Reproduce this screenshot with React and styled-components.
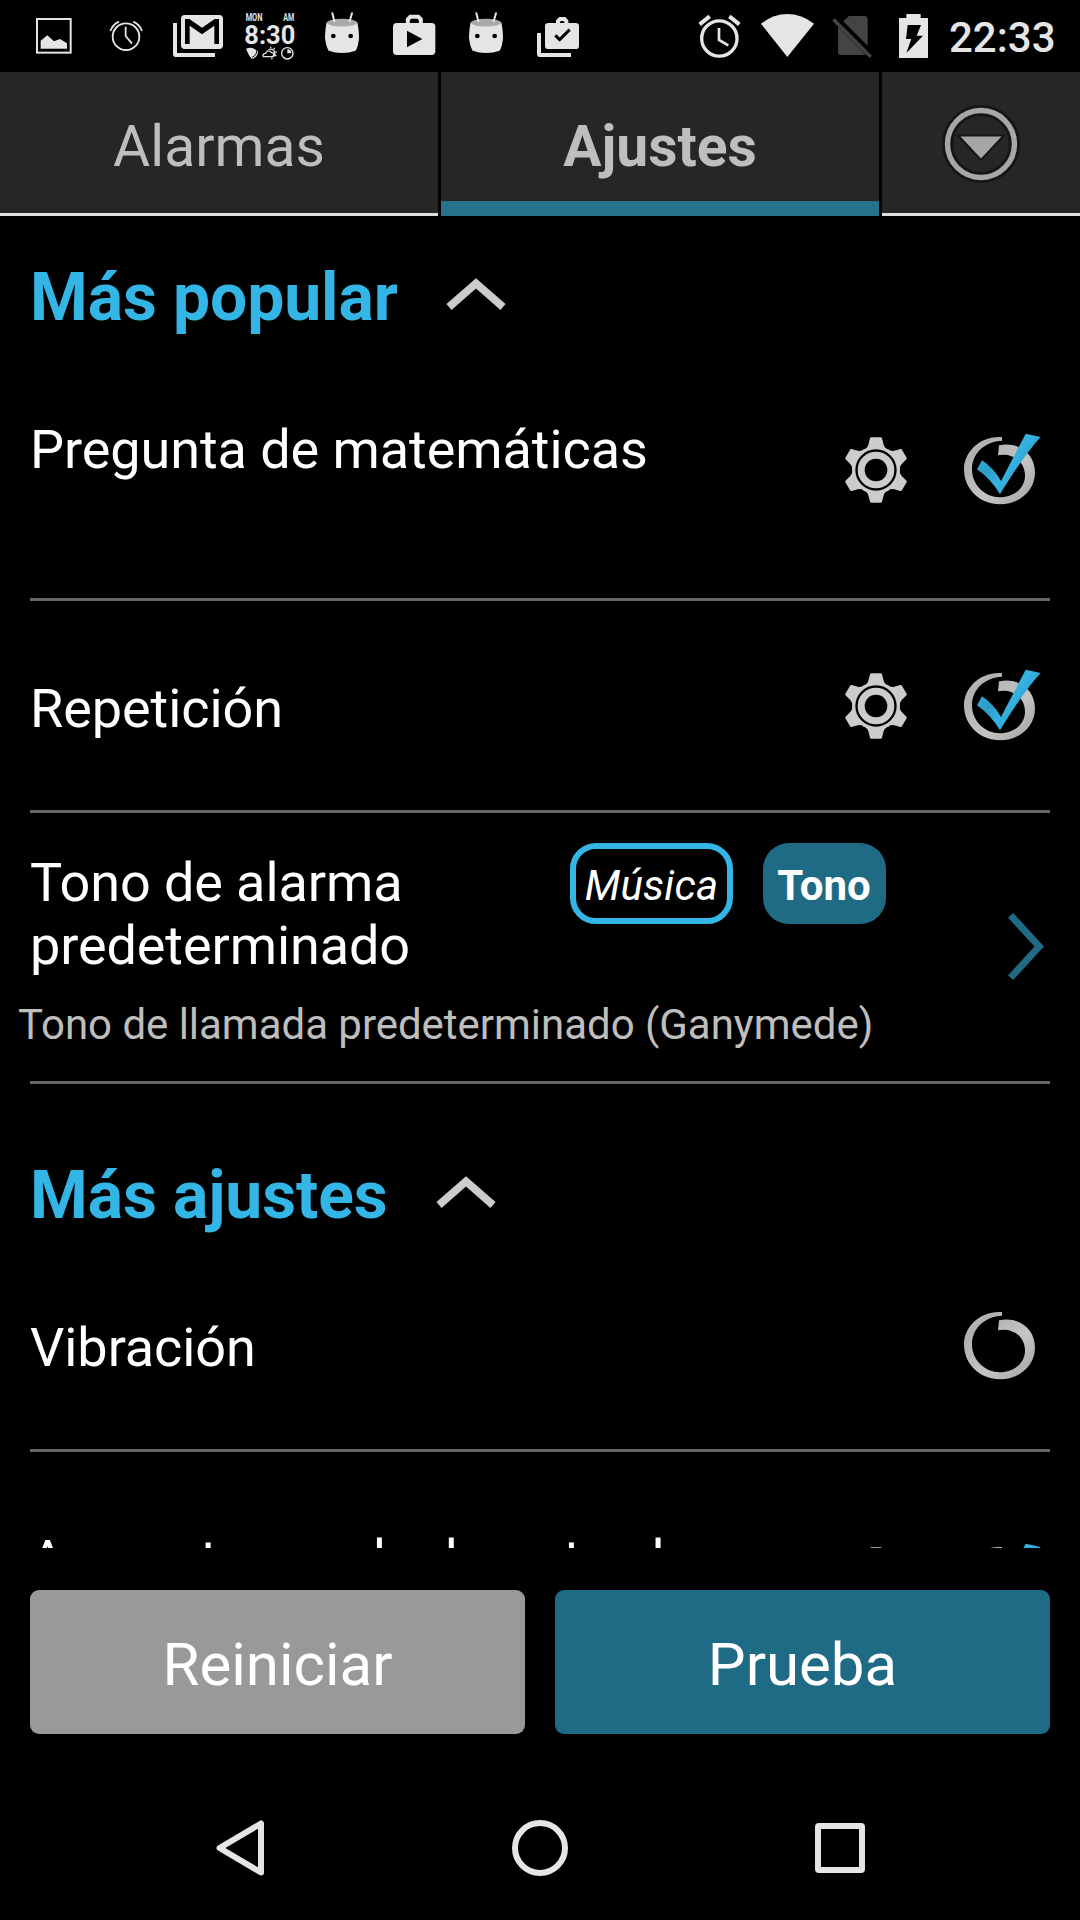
import React, { useState } from 'react';
import styled, { createGlobalStyle } from 'styled-components';

const BLUE = '#33b5e5';
const TEAL = '#1f6b85';
const STATUS = '#e5e5e5';

const App = () => {
  const [tab, setTab] = useState('Ajustes');

  return (
    <Screen>
      <GlobalStyle />
      <StatusBar>
        <PictureIcon />
        <ThinAlarmIcon />
        <MailIcon />
        <ClockWidgetIcon />
        <DroidIcon />
        <PlayBagIcon />
        <DroidIcon />
        <CheckBagIcon />
        <SystemIcons />
      </StatusBar>

      <Tabs>
        {['Alarmas', 'Ajustes'].map(name => (
          <Tab key={name} $active={tab === name} onClick={() => setTab(name)}>
            {name}
          </Tab>
        ))}
        <MenuTab>
          <DropdownIcon />
        </MenuTab>
      </Tabs>

      <List>
        <Heading $height={149} $top={43}>
          Más popular
          <ChevronUp />
        </Heading>
        <Setting title="Pregunta de matemáticas" height={236} top={53} gear checked />
        <Setting title="Repetición" height={212} gear checked />
        <RingtoneRow>
          <RingtoneInfo>
            <RingtoneTop>
              <RingtoneTitle>Tono de alarma predeterminado</RingtoneTitle>
              <MusicChip>Música</MusicChip>
              <ToneChip>Tono</ToneChip>
            </RingtoneTop>
            <Subtitle>Tono de llamada predeterminado (Ganymede)</Subtitle>
          </RingtoneInfo>
          <ArrowRight />
        </RingtoneRow>
        <Heading $height={156} $top={73}>
          Más ajustes
          <ChevronUp />
        </Heading>
        <Setting title="Vibración" height={212} />
        <Setting title="Aumentar gradualmente el" height={259} iconTop={88} gear checked />
      </List>

      <Footer>
        <Button $color="#999999">Reiniciar</Button>
        <Button $color={TEAL}>Prueba</Button>
      </Footer>

      <NavBar>
        <NavIcon viewBox="0 0 72 72">
          <path d="M57 11.500V60.500L15.500 36Z" />
        </NavIcon>
        <NavIcon viewBox="0 0 72 72">
          <circle cx="36" cy="36" r="25" />
        </NavIcon>
        <NavIcon viewBox="0 0 72 72">
          <rect x="14" y="14" width="44" height="44" rx="1" />
        </NavIcon>
      </NavBar>
    </Screen>
  );
};

export default App;

const Setting = ({ title, height, top = 76, iconTop = 65, gear, checked }) => (
  <Row $height={height}>
    <RowTitle $top={top}>{title}</RowTitle>
    <RowIcons $top={iconTop}>
      {gear && <GearIcon />}
      <CheckIcon checked={checked} />
    </RowIcons>
  </Row>
);

const GearIcon = () => (
  <svg width="66" height="78" viewBox="-99 -120 198 234" fill="#cccccc">
    {[0, 60, 120, 180, 240, 300].map(deg => (
      <path
        key={deg}
        d="M-40 -60Q-26 -65 -23 -76L-18 -95Q-17 -98 -14 -98H14Q17 -98 18 -95L23 -76Q26 -65 40 -60Z"
        transform={`rotate(${deg})`}
      />
    ))}
    <circle r="71" />
    <circle r="58.5" fill="none" stroke="#000" strokeWidth="7" />
    <circle r="34" fill="#000" />
  </svg>
);

const CheckIcon = ({ checked }) => (
  <svg width="84" height="78" viewBox="480 90 252 234">
    <defs>
      <linearGradient id="ring" x1="0" y1="0" x2="1" y2="1">
        <stop offset="0" stopColor="#cdcdcd" />
        <stop offset="0.2" stopColor="#b0b0b0" />
        <stop offset="0.6" stopColor="#c4c4c4" />
        <stop offset="1" stopColor="#a2a2a2" />
      </linearGradient>
      <linearGradient id="tick" x1="0" y1="0" x2="1" y2="0.6">
        <stop offset="0" stopColor="#3ab4e2" />
        <stop offset="0.4" stopColor="#2c9dcb" />
        <stop offset="0.6" stopColor="#36b3e2" />
        <stop offset="1" stopColor="#2a93bf" />
      </linearGradient>
    </defs>
    <path
      d="M606 111C542 106 492 154 492 208C492 268 540 313 600 313C660 313 705 270 705 218C705 164 662 124 597 136L594 166C640 156 675 187 675 227C675 263 642 292 600 292C555 292 516 256 516 208C516 160 555 124 606 122Z"
      fill="url(#ring)"
    />
    {checked && (
      <path
        d="M531 208L546 181Q580 203 603 243L677 101L722 111Q672 165 600 283Q572 236 531 208Z"
        fill="url(#tick)"
      />
    )}
  </svg>
);

const ChevronUp = () => (
  <svg width="60" height="33" viewBox="0 0 60 33" fill="none" stroke="#cccccc" strokeWidth="7.8">
    <path d="M3 29L30 5.4L57 29" />
  </svg>
);

const ArrowRight = () => (
  <svg width="36" height="68" viewBox="0 0 36 68" fill="none" stroke={TEAL} strokeWidth="7">
    <path d="M2.6 2.4L31.2 33.5L2.6 64.6" />
  </svg>
);

const DropdownIcon = () => (
  <svg width="84" height="84" viewBox="0 0 84 84">
    <circle cx="42" cy="42" r="33.5" fill="none" stroke="#151515" strokeWidth="11" />
    <circle cx="42" cy="42" r="33.5" fill="none" stroke="#a6a6a6" strokeWidth="5.4" />
    <path d="M21.5 34.5H62.5L42 56.5Z" fill="#a6a6a6" stroke="#151515" strokeWidth="4" paintOrder="stroke" />
  </svg>
);

const PictureIcon = () => (
  <StatusIcon viewBox="54 0 216 216">
    <rect x="111" y="57" width="101" height="101" fill="none" stroke={STATUS} strokeWidth="6" />
    <path d="M122 146V122L142 106L162 124L180 117L201 130V146Z" />
  </StatusIcon>
);

const ThinAlarmIcon = () => (
  <StatusIcon viewBox="270 0 216 216">
    <g fill="none" stroke={STATUS} strokeWidth="5.500">
      <circle cx="378" cy="110" r="40" />
      <path d="M377 80V108L396 131M331 93Q338 74 357 65M426 93Q419 74 400 65" />
    </g>
  </StatusIcon>
);

const MailIcon = () => (
  <StatusIcon viewBox="486 0 216 216">
    <path d="M519 69H531V159H645V171H529Q519 171 519 161Z" />
    <rect x="543" y="45" width="126" height="102" rx="11" />
    <path d="M555 57H568L606 83L644 57H657V132H643V77L606 103L569 77V132H555Z" fill="#000" />
  </StatusIcon>
);

const ClockWidgetIcon = () => (
  <StatusIcon viewBox="702 0 216 216">
    <WidgetText x="737" y="63" fontSize="32" textLength="50" lengthAdjust="spacingAndGlyphs">MON</WidgetText>
    <WidgetText x="850" y="63" fontSize="32" textLength="33" lengthAdjust="spacingAndGlyphs">AM</WidgetText>
    <WidgetText x="733" y="132" fontSize="80" textLength="153" lengthAdjust="spacingAndGlyphs">8:30</WidgetText>
    <path d="M738 146Q752 140 762 146L774 154Q774 172 756 177Q748 170 744 160Z" />
    <path d="M770 152Q770 166 757 172" fill="none" stroke="#000" strokeWidth="3" />
    <g fill="none" stroke={STATUS} strokeWidth="4">
      <path d="M790 170Q786 162 797 160Q803 147 814 157Q825 158 819 170Z" />
      <path d="M806 149Q818 144 824 156Q826 166 820 170" />
      <path d="M812 140V144M824 144L821 148M830 156H826M829 168L825 165M816 178L815 173" />
      <circle cx="862" cy="160" r="17" />
    </g>
    <path d="M862 160V148A12 12 0 0 1 874 160Z" />
  </StatusIcon>
);

const DroidIcon = () => (
  <StatusIcon viewBox="18 0 216 216">
    <path d="M80 66Q75 88 75 112Q77 138 86 152Q105 159 126 159Q147 159 167 152Q176 138 177 112Q177 88 172 66Z" />
    <ellipse cx="126" cy="68" rx="45" ry="11.5" fill="#a9a9a9" />
    <path d="M97 40L103 64M156 40L149 64" stroke={STATUS} strokeWidth="6" strokeLinecap="round" />
    <circle cx="100" cy="108" r="7" fill="#000" />
    <circle cx="152" cy="108" r="7" fill="#000" />
  </StatusIcon>
);

const PlayBagIcon = () => (
  <StatusIcon viewBox="234 0 216 216">
    <path d="M323.5 74V58L331 50.5H355L362.5 58V74" fill="none" stroke={STATUS} strokeWidth="12" />
    <rect x="279" y="69" width="127" height="96" rx="11" />
    <path d="M321 92L367 117L321 142Z" fill="#000" />
  </StatusIcon>
);

const CheckBagIcon = () => (
  <StatusIcon viewBox="666 0 216 216">
    <path d="M711 99H723V159H813V171H721Q711 171 711 161Z" />
    <path d="M774 72V63L780 57H793L799 63V72" fill="none" stroke={STATUS} strokeWidth="12" />
    <rect x="735" y="69" width="102" height="78" rx="10" />
    <path d="M766 106L779 119L809 89" fill="none" stroke="#000" strokeWidth="9" />
  </StatusIcon>
);

const SystemIcons = () => (
  <SystemGroup>
    <StatusIcon $width={45} viewBox="51 0 135 216">
      <g fill="none" stroke={STATUS}>
        <circle cx="118" cy="115.5" r="53" strokeWidth="10" />
        <path d="M117 84V120L145 136" strokeWidth="8" />
        <path d="M59 73L89 49M178 73L148 49" strokeWidth="12" />
      </g>
    </StatusIcon>
    <StatusIcon $width={55} viewBox="240 0 165 216">
      <path d="M243 71Q280 42 322 42Q365 42 402 71L322 171Z" />
    </StatusIcon>
    <StatusIcon $width={40} viewBox="459 0 120 216">
      <g fill="#444444">
        <path d="M507 48H553Q563 48 563 58V137L490 64Z" />
        <path d="M474 80L558 164Q556 165 553 165H484Q474 165 474 155Z" />
        <path d="M464 55L576 167L569 174L457 62Z" />
      </g>
    </StatusIcon>
    <StatusIcon $width={38} viewBox="633 0 114 216">
      <path d="M657 54H679V42H722V54H744V174H657Z" />
      <path d="M683 75H723L710 107H729L679 159L694 117H678Z" fill="#000" />
    </StatusIcon>
    <Time>22:33</Time>
  </SystemGroup>
);

const GlobalStyle = createGlobalStyle`
  body {
    margin: 0;
    background: #000;
    font-family: Roboto, 'Liberation Sans', sans-serif;
  }
`;

const Screen = styled.div`
  display: flex;
  flex-direction: column;
  width: 1080px;
  height: 1920px;
  overflow: hidden;
  background: #000;
  color: #fff;

  svg {
    display: block;
    flex-shrink: 0;
  }
`;

const StatusBar = styled.div`
  display: flex;
  align-items: center;
  height: 72px;
  padding-left: 18px;
`;

const StatusIcon = styled.svg`
  width: ${({ $width = 72 }) => $width}px;
  height: 72px;
  fill: ${STATUS};
  overflow: visible;
`;

const WidgetText = styled.text`
  fill: ${STATUS};
  font-weight: 700;
`;

const SystemGroup = styled.div`
  display: flex;
  align-items: center;
  gap: 18px;
  margin-left: 103px;
`;

const Time = styled.span`
  margin: 2px 0 0 2px;
  color: ${STATUS};
  font-size: 42px;
  font-weight: 500;
  line-height: 49px;
`;

const Tabs = styled.nav`
  display: flex;
  gap: 3px;
  height: 144px;
`;

const Tab = styled.button`
  box-sizing: border-box;
  width: 438px;
  padding: ${({ $active }) => $active ? '20px 0 0' : '8px 0 0'};
  border: 0;
  border-bottom: ${({ $active }) => $active ? '15px solid #27738d' : '3px solid #e0e0e0'};
  background: #262626;
  color: #bebebe;
  font-family: inherit;
  font-size: 57px;
  font-weight: ${({ $active }) => $active ? 700 : 400};
`;

const MenuTab = styled.div`
  box-sizing: border-box;
  display: flex;
  flex: 1;
  justify-content: center;
  padding-top: 30px;
  border-bottom: 3px solid #e0e0e0;
  background: #262626;
`;

const List = styled.main`
  height: 1332px;
  overflow: hidden;
`;

const Heading = styled.h2`
  box-sizing: border-box;
  display: flex;
  gap: 48px;
  height: ${({ $height }) => $height}px;
  margin: 0;
  padding: ${({ $top }) => $top}px 30px 0;
  color: ${BLUE};
  font-size: 66px;
  font-weight: 700;
  letter-spacing: -0.1px;
  line-height: 77px;

  svg {
    margin-top: 19px;
  }
`;

const Row = styled.section`
  box-sizing: border-box;
  display: flex;
  justify-content: space-between;
  height: ${({ $height }) => $height}px;
  margin: 0 30px;
  border-bottom: 3px solid #666666;
`;

const RowTitle = styled.div`
  width: 760px;
  padding-top: ${({ $top }) => $top}px;
  font-size: 54px;
  letter-spacing: -0.07px;
  line-height: 63px;
`;

const RowIcons = styled.div`
  display: flex;
  gap: 51px;
  padding: ${({ $top }) => $top}px 6px 0 0;
`;

const RingtoneRow = styled(Row)`
  align-items: center;
  height: 271px;
  padding-right: 6px;
`;

const RingtoneInfo = styled.div`
  align-self: flex-start;
  padding-top: 30px;
`;

const RingtoneTop = styled.div`
  display: flex;
  align-items: flex-start;
`;

const RingtoneTitle = styled.div`
  width: 500px;
  margin: 8px 40px 0 0;
  font-size: 54px;
  letter-spacing: -0.1px;
  line-height: 63px;
`;

const Chip = styled.span`
  box-sizing: border-box;
  height: 81px;
  border-radius: 26px;
  font-size: 42px;
  text-align: center;
`;

const MusicChip = styled(Chip)`
  width: 163px;
  margin-right: 30px;
  border: 6px solid ${BLUE};
  font-style: italic;
  letter-spacing: 0.2px;
  line-height: 73px;
`;

const ToneChip = styled(Chip)`
  width: 123px;
  padding-right: 1px;
  background: ${TEAL};
  font-weight: 700;
  line-height: 85px;
`;

const Subtitle = styled.div`
  margin: 23px 0 0 -12px;
  color: #bebebe;
  font-size: 42px;
  letter-spacing: -0.03px;
  line-height: 49px;
`;

const Footer = styled.footer`
  display: flex;
  gap: 30px;
  padding: 42px 30px;
`;

const Button = styled.button`
  flex: 1;
  height: 144px;
  padding: 4px 0 0;
  border: 0;
  border-radius: 9px;
  background: ${({ $color }) => $color};
  color: #fff;
  font-family: inherit;
  font-size: 60px;
`;

const NavBar = styled.div`
  display: flex;
  align-items: center;
  justify-content: center;
  gap: 228px;
  height: 144px;
`;

const NavIcon = styled.svg`
  width: 72px;
  height: 72px;
  fill: none;
  stroke: ${STATUS};
  stroke-width: 6;
  stroke-linejoin: round;
`;
